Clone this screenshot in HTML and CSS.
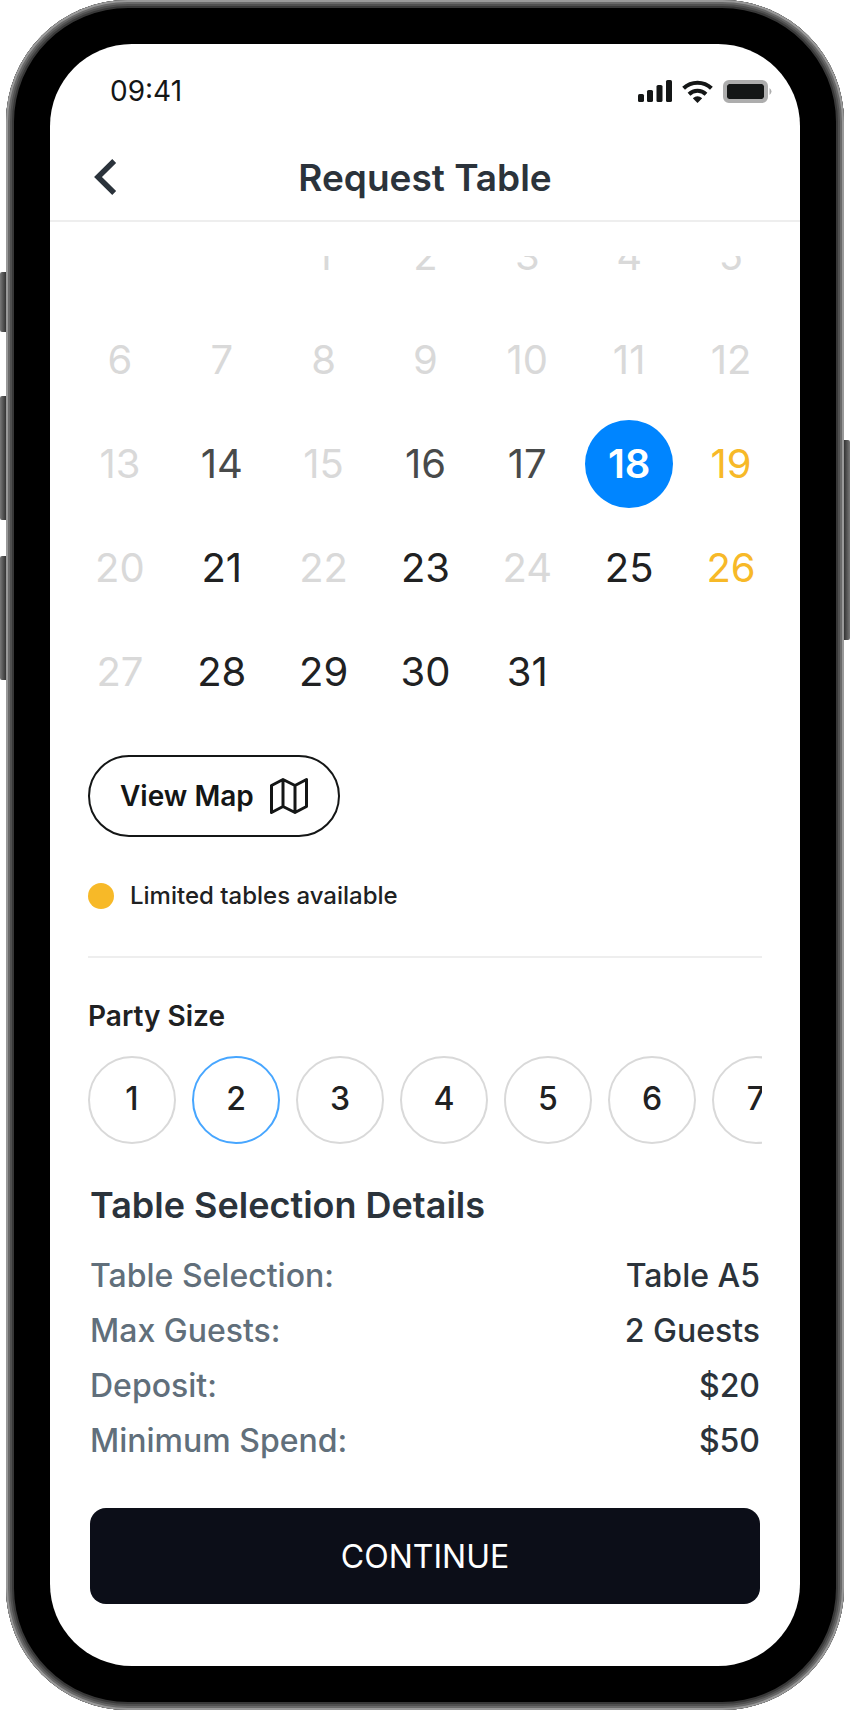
FILE: index.html
```html
<!DOCTYPE html>
<html lang="en">
<head>
    <meta charset="utf-8">
    <meta name="viewport" content="width=device-width, initial-scale=1">
    <title>Request Table</title>
    <link rel="stylesheet" href="styles.css">
</head>
<body>

<div class="phone">
    <span class="side-key mute"></span>
    <span class="side-key volume-up"></span>
    <span class="side-key volume-down"></span>
    <span class="side-key power"></span>

    <div class="bezel">
        <div class="screen">
            <div class="status-bar">
                <span class="time">09:41</span>
                <div class="status-icons">
                    <svg width="34" height="22" viewBox="0 0 34 22" fill="#141616">
                        <rect x="0" y="14" width="6" height="8" rx="1.6"/>
                        <rect x="9" y="10" width="6" height="12" rx="1.6"/>
                        <rect x="18.500" y="5" width="6" height="17" rx="1.6"/>
                        <rect x="28" y="0" width="6" height="22" rx="1.6"/>
                    </svg>
                    <svg width="31" height="23" viewBox="0 0 31 23" fill="none" stroke="#141616" stroke-width="4">
                        <path d="M1.600 8.300a20 20 0 0 1 27.800 0"/>
                        <path d="M7 14.200a12.500 12.500 0 0 1 17 0"/>
                        <path d="M15.500 23l-4.700-4.800q4.700-3.700 9.400 0z" fill="#141616" stroke="none"/>
                    </svg>
                    <svg width="50" height="23" viewBox="0 0 50 23">
                        <rect x="2" y="2" width="41" height="19" rx="4" fill="#fff" stroke="#adadad" stroke-width="4"/>
                        <rect x="4" y="4" width="37" height="15" rx="2.500" fill="#141616"/>
                        <path d="M46.500 8q4 3.500 0 7z" fill="#adadad"/>
                    </svg>
                </div>
            </div>

            <header class="header">
                <button class="back" type="button" aria-label="Back">
                    <svg width="24" height="36" viewBox="0 0 24 36" fill="none" stroke="#2b333b" stroke-width="5.500">
                        <path d="M21.200 2L5 18l16.200 16"/>
                    </svg>
                </button>
                <h1>Request Table</h1>
            </header>

            <main class="content">
                <div class="calendar">
                    <table>
                        <tbody>
                            <tr>
                                <td></td>
                                <td></td>
                                <td><button disabled>1</button></td>
                                <td><button disabled>2</button></td>
                                <td><button disabled>3</button></td>
                                <td><button disabled>4</button></td>
                                <td><button disabled>5</button></td>
                            </tr>
                            <tr>
                                <td><button disabled>6</button></td>
                                <td><button disabled>7</button></td>
                                <td><button disabled>8</button></td>
                                <td><button disabled>9</button></td>
                                <td><button disabled>10</button></td>
                                <td><button disabled>11</button></td>
                                <td><button disabled>12</button></td>
                            </tr>
                            <tr>
                                <td><button disabled>13</button></td>
                                <td><button class="soft">14</button></td>
                                <td><button disabled>15</button></td>
                                <td><button class="soft">16</button></td>
                                <td><button class="soft">17</button></td>
                                <td><button class="selected">18</button></td>
                                <td><button class="limited">19</button></td>
                            </tr>
                            <tr>
                                <td><button disabled>20</button></td>
                                <td><button>21</button></td>
                                <td><button disabled>22</button></td>
                                <td><button>23</button></td>
                                <td><button disabled>24</button></td>
                                <td><button>25</button></td>
                                <td><button class="limited">26</button></td>
                            </tr>
                            <tr>
                                <td><button disabled>27</button></td>
                                <td><button>28</button></td>
                                <td><button>29</button></td>
                                <td><button>30</button></td>
                                <td><button>31</button></td>
                                <td></td>
                                <td></td>
                            </tr>
                        </tbody>
                    </table>
                </div>

                <button class="view-map" type="button">
                    View Map
                    <svg width="38" height="38" viewBox="0 0 38 38" fill="none" stroke="#141616" stroke-width="3" stroke-linejoin="round">
                        <path d="M1.500 8.500L13 2.500l12 6 11.500-6v27L25 35.500l-12-6-11.500 6zM13 2.500v27M25 8.500v27"/>
                    </svg>
                </button>

                <p class="legend"><span class="dot"></span>Limited tables available</p>

                <fieldset class="party">
                    <legend>Party Size</legend>
                    <div class="sizes">
                        <label><input type="radio" name="party" value="1"><span>1</span></label>
                        <label><input type="radio" name="party" value="2" checked><span>2</span></label>
                        <label><input type="radio" name="party" value="3"><span>3</span></label>
                        <label><input type="radio" name="party" value="4"><span>4</span></label>
                        <label><input type="radio" name="party" value="5"><span>5</span></label>
                        <label><input type="radio" name="party" value="6"><span>6</span></label>
                        <label><input type="radio" name="party" value="7"><span>7</span></label>
                    </div>
                </fieldset>

                <section class="details">
                    <h2>Table Selection Details</h2>
                    <dl>
                        <div><dt>Table Selection:</dt><dd>Table A5</dd></div>
                        <div><dt>Max Guests:</dt><dd>2 Guests</dd></div>
                        <div><dt>Deposit:</dt><dd>$20</dd></div>
                        <div><dt>Minimum Spend:</dt><dd>$50</dd></div>
                    </dl>
                    <button class="continue" type="button">CONTINUE</button>
                </section>
            </main>
        </div>
    </div>
</div>

</body>
</html>
```
FILE: styles.css
```css
* {
    box-sizing: border-box;
}
body {
    margin: 0;
    background-color: #fff;
    color: #202122;
    font-family: Inter, sans-serif;
}
h1, h2, p, dl, dd {
    margin: 0;
}
button {
    font-family: inherit;
    color: inherit;
    cursor: pointer;
}
svg {
    display: block;
}

/* phone frame */
.phone {
    position: relative;
    padding: 0 6px;
}
.bezel {
    padding: 44px;
    border-radius: 122px;
    background-color: #000;
    box-shadow: inset 0 0 0 2px #999, inset 0 0 0 4px #6a6a6a, inset 0 0 0 6px #505050, inset 0 0 0 8px #383838;
}
.screen {
    border-radius: 82px;
    background-color: #fff;
    overflow: hidden;
}
.side-key {
    position: absolute;
    left: 0;
    width: 6px;
    border-radius: 2px 0 0 2px;
    background: linear-gradient(to right, #777, #333);
}
.mute {
    top: 272px;
    height: 60px;
}
.volume-up {
    top: 396px;
    height: 124px;
}
.volume-down {
    top: 556px;
    height: 124px;
}
.power {
    top: 440px;
    left: auto;
    right: 0;
    height: 200px;
    border-radius: 0 2px 2px 0;
    background: linear-gradient(to left, #777, #333);
}

/* top bars */
.status-bar {
    display: flex;
    justify-content: space-between;
    align-items: center;
    height: 92px;
    padding: 2px 27px 0 60px;
}
.time {
    font-size: 28px;
    color: #141616;
}
.status-icons {
    display: flex;
    align-items: center;
    gap: 10px;
}
.header {
    display: grid;
    grid-template-columns: 48px 1fr 48px;
    align-items: center;
    height: 86px;
    padding: 0 38px 2px;
    border-bottom: 2px solid #eee;
}
.header h1 {
    font-size: 37px;
    font-weight: 600;
    text-align: center;
    color: #2b333b;
}
.back {
    padding: 0 5px;
    border: none;
    background: none;
}
.content {
    padding: 34px 38px 62px;
}

/* calendar, scrolled half a row */
.calendar {
    margin: 0 -20px 0 -19px;
    overflow: hidden;
}
.calendar table {
    width: 100%;
    margin-top: -52px;
    table-layout: fixed;
    border-collapse: collapse;
}
.calendar td {
    height: 104px;
    padding: 0;
    text-align: center;
}
.calendar button {
    width: 88px;
    height: 88px;
    padding: 0 0 2px;
    border: none;
    border-radius: 50%;
    background: none;
    font-size: 40px;
}
.calendar button:disabled {
    color: #d9d9d9;
    cursor: default;
}
.calendar .soft {
    color: #484a4a;
}
.calendar .limited {
    color: #f7b928;
}
.calendar .selected {
    background-color: #0085ff;
    color: #fff;
    font-weight: 600;
}

.view-map {
    display: flex;
    align-items: center;
    gap: 16px;
    height: 82px;
    margin-top: 31px;
    padding: 0 30px;
    border: 2px solid #141616;
    border-radius: 41px;
    background: none;
    font-size: 28px;
    font-weight: 600;
    color: #141616;
}
.legend {
    display: flex;
    align-items: center;
    gap: 16px;
    padding: 44px 0 45px;
    border-bottom: 2px solid #eee;
    font-size: 24px;
    line-height: 30px;
    font-weight: 500;
}
.dot {
    width: 26px;
    height: 26px;
    border-radius: 50%;
    background-color: #f7b928;
}

/* party size */
.party {
    min-width: 0;
    margin: 40px 0 0;
    padding: 0;
    border: none;
}
.party legend {
    padding: 0;
    font-size: 28px;
    line-height: 36px;
    font-weight: 600;
}
.sizes {
    display: flex;
    gap: 16px;
    margin-top: 22px;
    overflow: hidden;
}
.sizes label {
    flex: none;
    cursor: pointer;
}
.sizes input {
    position: absolute;
    opacity: 0;
}
.sizes span {
    display: block;
    width: 88px;
    height: 88px;
    border: 2px solid #d9d9d9;
    border-radius: 50%;
    font-size: 32px;
    line-height: 82px;
    font-weight: 500;
    text-align: center;
}
.sizes input:checked + span {
    border-color: #47a6ff;
}

/* details */
.details {
    padding: 0 2px;
}
.details h2 {
    margin-top: 38px;
    font-size: 36px;
    line-height: 46px;
    font-weight: 600;
    color: #2b333b;
}
.details dl {
    margin-top: 20px;
}
.details dl div {
    display: flex;
    justify-content: space-between;
    font-size: 32px;
    line-height: 55px;
    font-weight: 500;
}
.details dt {
    color: #616f7b;
}
.details dd {
    color: #2b333b;
}
.continue {
    width: 100%;
    height: 96px;
    margin-top: 40px;
    border: none;
    border-radius: 16px;
    background-color: #0c0e18;
    font-size: 32px;
    color: #fff;
}
```
